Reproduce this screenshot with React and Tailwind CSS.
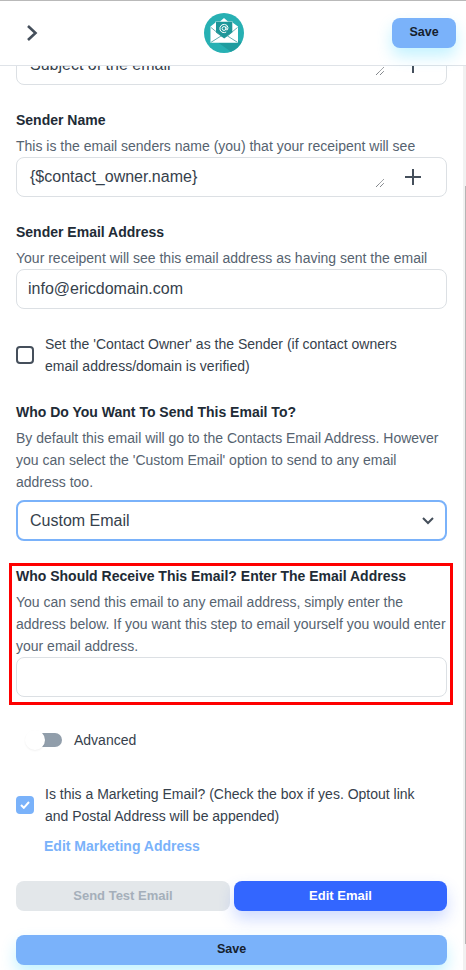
import React from "react";

function Title({ children, className = "" }) {
  return <h3 className={`h-[22px] whitespace-nowrap text-[14px] font-bold leading-[22px] text-[#212b36] ${className}`}>{children}</h3>;
}

function Lines({ items, className = "" }) {
  return (
    <div className={`whitespace-nowrap text-[14px] leading-[22px] ${className}`}>
      {items.map((text) => (
        <div key={text}>{text}</div>
      ))}
    </div>
  );
}

function Grip() {
  return (
    <svg width="10" height="10" viewBox="0 0 10 10" stroke="#4b5057" strokeWidth="0.9" className="mt-[11px] shrink-0">
      <path d="M1 9 9 1M5 9l4-4" strokeDasharray="1.1 0.5" />
    </svg>
  );
}

function TemplateField({ value }) {
  return (
    <div className="flex h-10 shrink-0 items-center rounded-lg border border-[#dce0e4] pl-[13px] pr-[25px]">
      <span className="flex-1 text-[16px] leading-6 text-[#36414c]">{value}</span>
      <Grip />
      <svg width="16" height="16" viewBox="0 0 16 16" fill="none" stroke="#454f5b" strokeWidth="2" strokeLinecap="round" className="ml-[20px] shrink-0">
        <path d="M8 0.500v15M0.500 8h15" />
      </svg>
    </div>
  );
}

function MailLogo() {
  return (
    <svg width="40" height="40" viewBox="0 0 40 40">
      <circle cx="20" cy="20" r="20" fill="#27b0b3" />
      <path d="M14 29.500 27 38.700Q34 35.500 37.500 29.500L34 27V29.500Z" fill="#1f9c9f" />
      <path d="M6.500 13.500 11.500 9.500V8.500H16L20 5 24 8.500H28.500V9.500L34 13.500V29.800H6.500Z" fill="#fff" />
      <path d="M12 8.700H28.300V19.500L20.200 25.500 12 19.500Z" fill="#1d9699" />
      <path d="M7 14.500 18 23.500M33.500 14.500 22.500 23.500M7 29.300 17 23M33.500 29.300 23.500 23" fill="none" stroke="#3b9b9d" strokeWidth="0.8" />
      <g fill="none" stroke="#fff" strokeWidth="1">
        <circle cx="20" cy="15.500" r="1.900" />
        <path d="M22 13.300V16.200Q22.400 17.600 23.500 16.700Q24.700 14.500 23 12.400Q20.500 10.600 17.800 11.900Q15.200 14 16 17Q17.500 20 20.500 19.600L22.200 19" />
      </g>
    </svg>
  );
}

export default function App() {
  return (
    <div className="relative flex h-[970px] w-[466px] flex-col overflow-hidden bg-white font-['Liberation_Sans',Arial,sans-serif]">
      <header className="relative z-10 flex h-[66px] shrink-0 items-center justify-between border-b border-t border-b-[#dfe3e8] border-t-[#b9b9b9] bg-white pl-[26px] pr-[10px]">
        <svg width="12" height="16" viewBox="0 0 12 16" fill="none" stroke="#454f5b" strokeWidth="2.600" className="mr-[18px]">
          <path d="M2 1l7.500 7L2 15" />
        </svg>
        <MailLogo />
        <button className="h-[30px] w-16 rounded-lg bg-[#7ab2fa] pb-px text-[12.500px] font-bold text-[#16212e] shadow-[0_8px_16px_rgba(0,200,255,0.24)]">
          Save
        </button>
      </header>

      <div className="flex min-h-0 flex-1">
        <main className="flex min-w-0 flex-1 flex-col overflow-hidden pl-4 pr-4">
          <div className="-mt-[21px] flex shrink-0 flex-col">
            <TemplateField value="Subject of the email" />
          </div>

          <section className="mt-6 flex shrink-0 flex-col">
            <Title>Sender Name</Title>
            <Lines className="mt-1 text-[#566370]" items={["This is the email senders name (you) that your receipent will see"]} />
            <TemplateField value="{$contact_owner.name}" />
          </section>

          <section className="mt-6 flex shrink-0 flex-col">
            <Title>Sender Email Address</Title>
            <Lines className="mt-1 text-[#566370]" items={["Your receipent will see this email address as having sent the email"]} />
            <div className="flex h-10 items-center rounded-lg border border-[#dce0e4] px-[11px] text-[16px] text-[#36414c]">info@ericdomain.com</div>
          </section>

          <label className="mt-6 flex shrink-0 items-center">
            <span className="mr-[11px] h-[18px] w-[18px] shrink-0 rounded-[4px] border-2 border-[#454f5b]" />
            <Lines className="text-[#36414c]" items={["Set the 'Contact Owner' as the Sender (if contact owners", "email address/domain is verified)"]} />
          </label>

          <section className="mt-6 flex shrink-0 flex-col">
            <Title>Who Do You Want To Send This Email To?</Title>
            <Lines
              className="mt-1 text-[#566370]"
              items={[
                "By default this email will go to the Contacts Email Address. However",
                "you can select the 'Custom Email' option to send to any email",
                "address too.",
              ]}
            />
            <div className="mt-[7px] flex h-[41px] items-center justify-between rounded-lg border-2 border-[#7ab2fa] pl-3 pr-[11px] text-[16px] text-[#36414c]">
              Custom Email
              <svg width="12" height="8" viewBox="0 0 12 8" fill="none" stroke="#454f5b" strokeWidth="2" className="mt-px">
                <path d="M1 1l5 5 5-5" />
              </svg>
            </div>
          </section>

          <section className="-ml-[7px] -mr-[6px] mt-[22px] flex h-[142px] shrink-0 flex-col border-[3px] border-[#fe0000] px-1 pr-[3px]">
            <Title className="-mt-px">Who Should Receive This Email? Enter The Email Address</Title>
            <Lines
              className="mt-1 text-[#566370]"
              items={[
                "You can send this email to any email address, simply enter the",
                "address below. If you want this step to email yourself you would enter",
                "your email address.",
              ]}
            />
            <div className="h-10 shrink-0 rounded-lg border border-[#dce0e4]" />
          </section>

          <div className="mt-6 flex h-[22px] shrink-0 items-center pl-[9px]">
            <span className="flex h-[14px] w-[37px] items-center rounded-[7px] bg-gradient-to-r from-white from-30% to-[#919eab] to-30%">
              <span className="h-5 w-5 rounded-full bg-white shadow-[0_1px_2px_rgba(0,0,0,0.06)]" />
            </span>
            <span className="ml-3 text-[14px] text-[#36414c]">Advanced</span>
          </div>

          <label className="mt-8 flex shrink-0 items-center">
            <span className="mr-[11px] flex h-[18px] w-[18px] shrink-0 items-center justify-center rounded-[4px] bg-[#7ab2fa]">
              <svg width="10" height="8" viewBox="0 0 10 8" fill="none" stroke="#fff" strokeWidth="2">
                <path d="M1 4l2.800 2.800L9 1" />
              </svg>
            </span>
            <Lines className="text-[#36414c]" items={["Is this a Marketing Email? (Check the box if yes. Optout link", "and Postal Address will be appended)"]} />
          </label>
          <a className="ml-7 mt-2 shrink-0 text-[14px] font-bold leading-[22px] text-[#7ab2fa]">Edit Marketing Address</a>

          <div className="mt-6 flex shrink-0 gap-1">
            <button className="h-[30px] w-[214px] rounded-lg bg-[#e3e7ea] text-[13px] font-bold text-[#a5afba]">Send Test Email</button>
            <button className="h-[30px] w-[213px] rounded-lg bg-[#3366ff] text-[13px] font-bold text-white shadow-[0_8px_16px_rgba(51,102,255,0.24)]">Edit Email</button>
          </div>
          <button className="mt-6 h-[30px] shrink-0 rounded-lg bg-[#7ab2fa] pb-px text-[12.500px] font-bold text-[#16212e] shadow-[0_8px_16px_rgba(0,200,255,0.24)]">
            Save
          </button>
        </main>
        <div className="w-[3px] shrink-0 bg-[#f1f1f1] pl-[2px] pt-[120px]">
          <div className="h-[758px] bg-[#b5b5b5]" />
        </div>
      </div>
    </div>
  );
}
